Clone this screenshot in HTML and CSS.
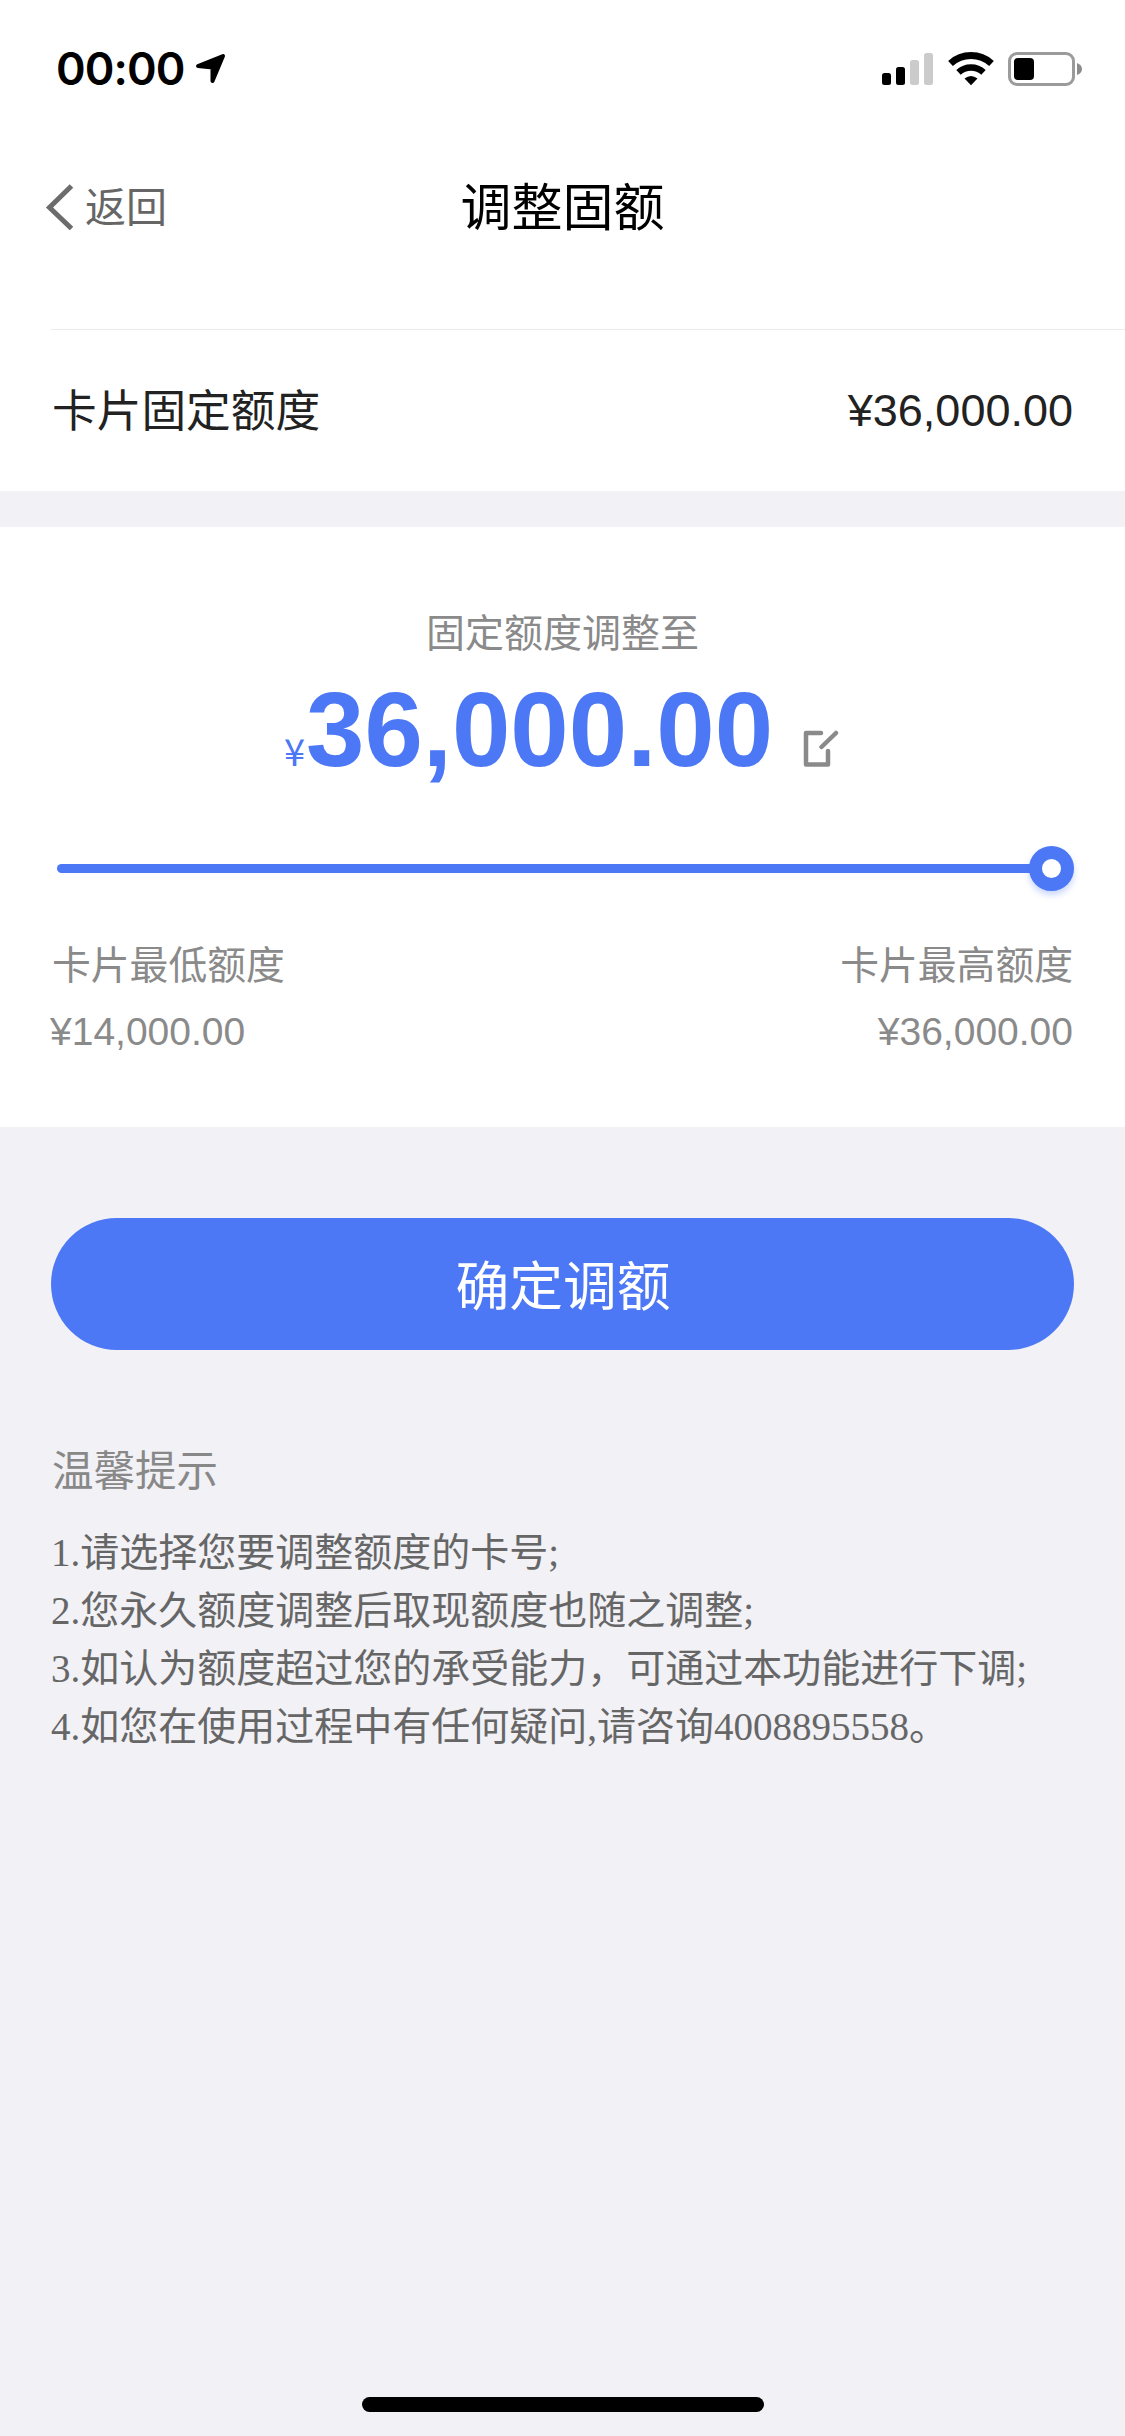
FILE: index.html
```
<!DOCTYPE html>
<html lang="zh-CN">
<head>
<meta charset="utf-8">
<title>调整固额</title>
<link rel="stylesheet" href="styles.css">
</head>
<body>
<header class="statusbar">
  <div class="clock"><span class="time">00:00</span>
    <svg class="locate" width="32" height="32" viewBox="0 0 32 32"><path d="M3 13 28 3 17.500 28V14.500Z" fill="#000" stroke="#000" stroke-width="4" stroke-linejoin="round"/></svg>
  </div>
  <svg class="indicators" width="202" height="36" viewBox="0 0 202 36">
    <rect x="1" y="22" width="9" height="12" rx="2.500"/>
    <rect x="15" y="16" width="9" height="18" rx="2.500"/>
    <rect x="29" y="9" width="9" height="25" rx="2.500" fill="#cbcbcb"/>
    <rect x="43" y="2" width="9" height="32" rx="2.500" fill="#cbcbcb"/>
    <g fill="none" stroke="#000" stroke-width="7">
      <path d="M69.500 12.500a30.500 30.500 0 0 1 41 0"/>
      <path d="M77.500 21.300a18.500 18.500 0 0 1 25 0" stroke-width="6.500"/>
    </g>
    <path d="M83.500 27.500Q90 22.500 96.500 27.500L90 34.300Z"/>
    <rect x="128.500" y="2.500" width="64" height="31" rx="7.500" fill="none" stroke="#9b9b9b" stroke-width="3"/>
    <rect x="133" y="7" width="20" height="22" rx="4"/>
    <path d="M196 12q5 2 5 6t-5 6Z" fill="#8c8c8c"/>
  </svg>
</header>
<nav class="navbar">
  <a class="back"><svg width="30" height="46" viewBox="0 0 30 46"><path d="M26.500 2 4.500 23.500 26.500 44.500" fill="none" stroke="#6c6c6c" stroke-width="5"/></svg><span>返回</span></a>
  <h1 class="title">调整固额</h1>
</nav>
<section class="current"><span class="label">卡片固定额度</span><span class="num">¥36,000.00</span></section>
<section class="adjust">
  <div class="caption">固定额度调整至</div>
  <div class="amount"><span class="yen">¥</span><span class="value">36,000.00</span>
    <svg class="edit" width="37" height="38" viewBox="0 0 37 38"><path d="M19 3H4V34.500H26V21M19.500 17 34 3" fill="none" stroke="#8a8a8a" stroke-width="4.500" stroke-linecap="round" stroke-linejoin="round"/></svg>
  </div>
  <div class="slider"><div class="track"></div><div class="knob"></div></div>
  <div class="range">
    <div class="limit"><span>卡片最低额度</span><span class="num low">¥14,000.00</span></div>
    <div class="limit max"><span>卡片最高额度</span><span class="num">¥36,000.00</span></div>
  </div>
</section>
<button class="confirm">确定调额</button>
<section class="tips">
  <h2>温馨提示</h2>
  <p>1.请选择您要调整额度的卡号;</p>
  <p>2.您永久额度调整后取现额度也随之调整;</p>
  <p>3.如认为额度超过您的承受能力，可通过本功能进行下调;</p>
  <p>4.如您在使用过程中有任何疑问,请咨询4008895558。</p>
</section>
<div class="home-indicator"></div>
</body>
</html>
```
FILE: styles.css
```
* { box-sizing: border-box; margin: 0; padding: 0; }
body {
  width: 1125px;
  height: 2436px;
  display: flex;
  flex-direction: column;
  background: #f1f1f6;
  font-family: "Noto Sans CJK SC", sans-serif;
  color: #222;
  overflow: hidden;
}
.statusbar {
  height: 132px;
  background: #fff;
  display: flex;
  justify-content: space-between;
  align-items: flex-start;
  padding: 51px 42px 0 56px;
  flex: none;
}
.clock { display: flex; gap: 10px; }
.time { font: 600 45px/36px Inter, sans-serif; letter-spacing: -0.900px; color: #000; }
.locate { margin-top: 2px; }
.navbar {
  height: 197px;
  background: #fff;
  padding: 0 45px 50px;
  display: grid;
  grid-template-columns: 1fr auto 1fr;
  align-items: center;
  flex: none;
}
.back { display: flex; align-items: center; gap: 10px; font-size: 41px; line-height: 60px; color: #666; }
.back svg { margin-top: 2px; }
.back span { padding-bottom: 3px; }
.title { font-size: 51px; font-weight: 400; line-height: 72px; padding-bottom: 3px; color: #000; }
.num { font-family: "Liberation Sans", Arial, sans-serif; }
.current {
  height: 162px;
  background: linear-gradient(#ececec, #ececec) 51px 0 / 100% 1px no-repeat #fff;
  display: flex;
  justify-content: space-between;
  align-items: center;
  padding: 0 52px;
  font-size: 44.700px;
  flex: none;
}
.current .label { padding-bottom: 5px; }
.current .num { font-size: 45px; padding-top: 2px; }
.adjust {
  height: 600px;
  margin-top: 36px;
  background: #fff;
  padding: 74px 52px 0;
  color: #8a8a8a;
  font-size: 39px;
  flex: none;
}
.caption { text-align: center; line-height: 58px; }
.amount {
  display: flex;
  align-items: baseline;
  color: #4c78f6;
  height: 120px;
  margin: 11px 0 0 232px;
}
.yen { font-size: 38px; line-height: 120px; width: 22px; }
.value { font: bold 105px/120px "Liberation Sans", Arial, sans-serif; }
.edit { margin-left: 29px; transform: translateY(2px); }
.slider { display: flex; align-items: center; height: 46px; margin: 55px -1px 0 5px; }
.track { flex: 1; height: 9px; background: #4c78f6; border-radius: 5px 0 0 5px; margin-right: -2px; }
.knob {
  width: 45px;
  height: 45px;
  border-radius: 50%;
  background: #fff;
  border: 13.500px solid #4c78f6;
  box-shadow: 0 4px 6px rgba(76, 120, 246, .3);
}
.range { display: flex; justify-content: space-between; margin-top: 42px; }
.limit { display: flex; flex-direction: column; line-height: 58px; font-size: 38.800px; }
.limit .num { font-size: 39px; line-height: 44px; margin-top: 19px; }
.low { margin-left: -2px; }
.max { text-align: right; }
.confirm {
  width: 1023px;
  height: 132px;
  margin: 91px 51px 0;
  padding: 0 0 3px 1px;
  border: 0;
  border-radius: 66px;
  background: #4c78f6;
  color: #fff;
  font: 400 53.800px/129px "Noto Sans CJK SC", sans-serif;
  flex: none;
}
.tips { margin: 88px 51px 0; color: #666; font: 39px/58px "Liberation Serif", "Noto Sans CJK SC", serif; }
.tips h2 { font: 400 41.500px/60px "Noto Sans CJK SC", sans-serif; color: #888; margin: 0 0 26px 1px; }
.tips p { white-space: nowrap; }
.home-indicator { width: 402px; height: 15px; border-radius: 8px; background: #000; margin: auto auto 24px; flex: none; }
```
